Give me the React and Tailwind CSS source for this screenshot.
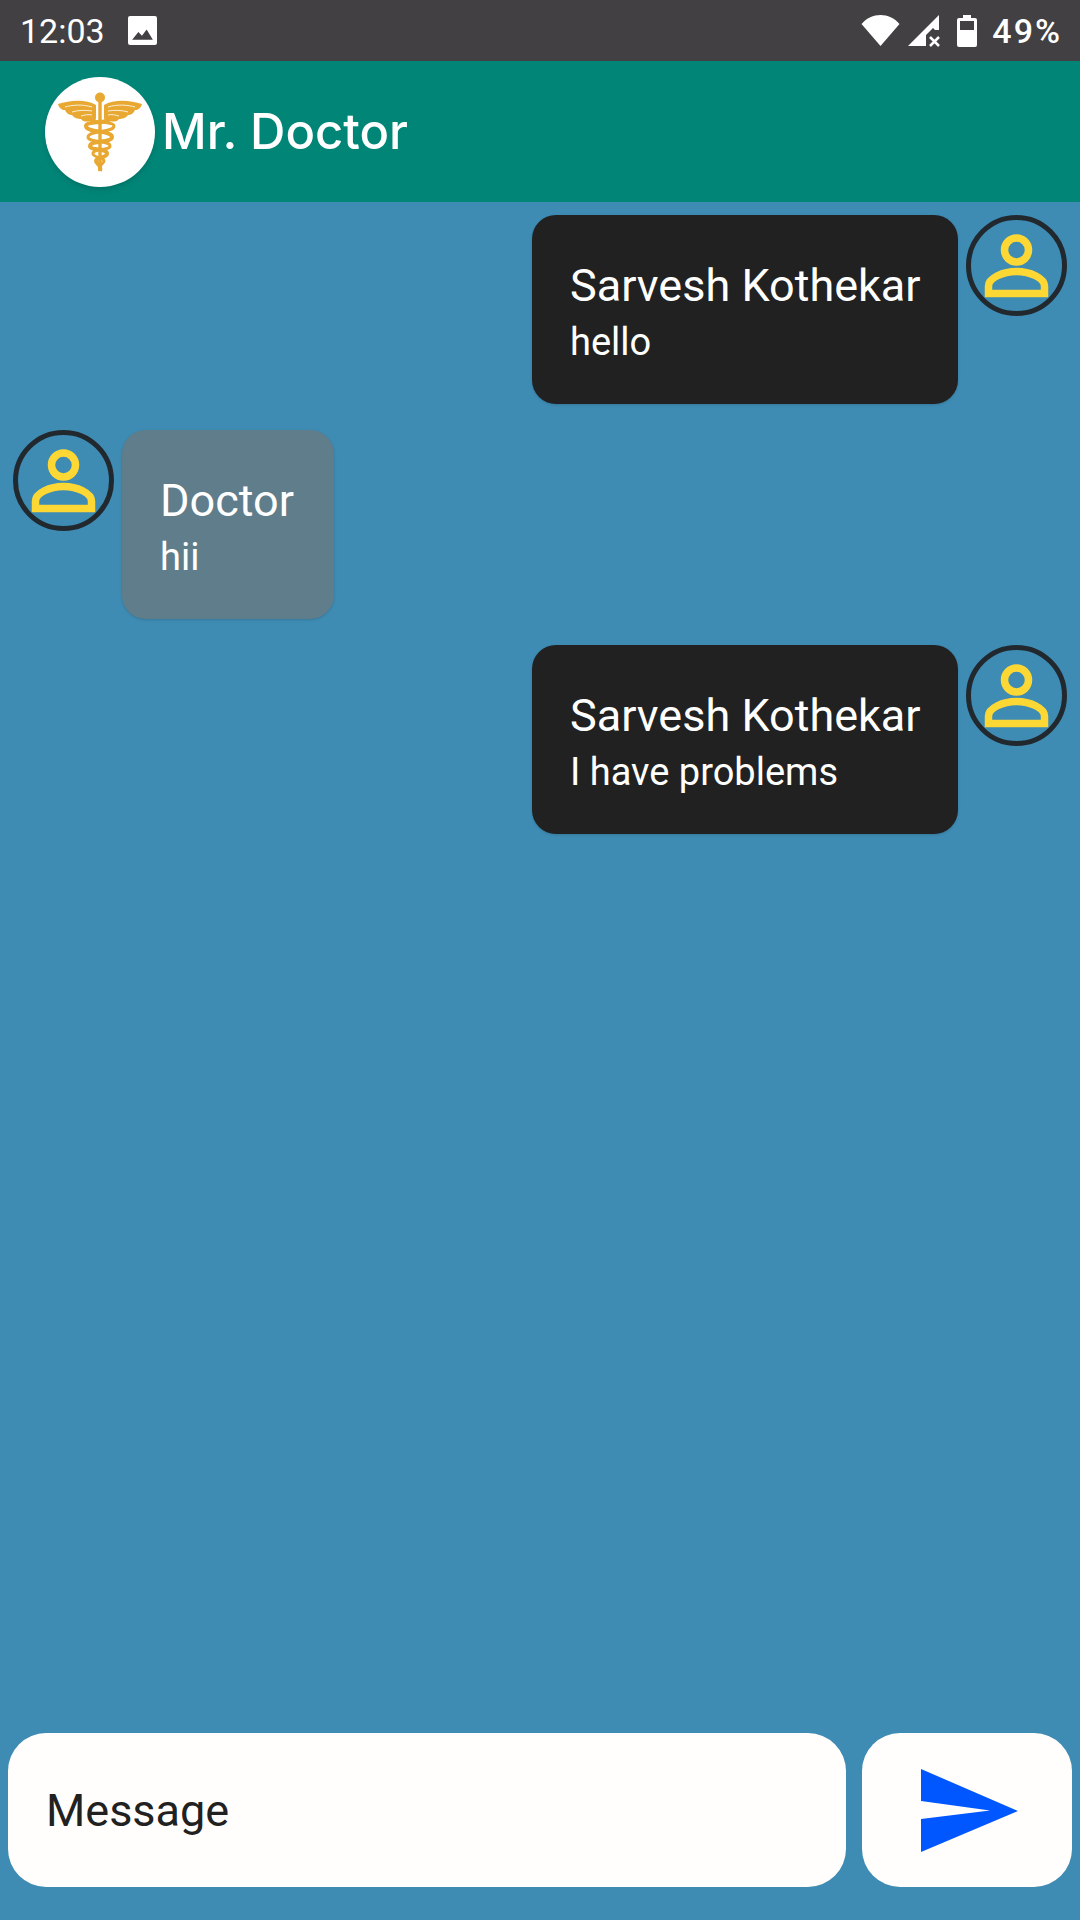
const roboto = { fontFamily: 'Roboto, sans-serif' };

const Person = () => (
  <svg viewBox="0 0 91 91" className="w-[91px] h-[91px]">
    <circle cx="45.500" cy="30" r="12" fill="none" stroke="#fdd835" strokeWidth="7.500" />
    <path d="M17.500 73.500 V66 C17.500 58 32 51.500 45.500 51.500 C59 51.500 73.500 58 73.500 66 V73.500 Z" fill="none" stroke="#fdd835" strokeWidth="7.500" />
  </svg>
);

const Avatar = () => (
  <div className="w-[101px] h-[101px] shrink-0 rounded-full border-[5px] border-[#22292e] flex items-center justify-center">
    <Person />
  </div>
);

const Bubble = ({ name, text, dark }) => (
  <div className={`h-[189px] rounded-[24px] pt-[43px] pl-[38px] text-white shadow-sm ${dark ? 'w-[426px] bg-[#212121]' : 'w-[212px] bg-[#607d8b]'}`}>
    <div className="text-[45px] leading-[56px] whitespace-nowrap">{name}</div>
    <div className="text-[38px] leading-[56px] whitespace-nowrap">{text}</div>
  </div>
);

const Sent = ({ name, text }) => (
  <div className="flex justify-end gap-[8px] pr-[13px]">
    <Bubble name={name} text={text} dark />
    <Avatar />
  </div>
);

const Received = ({ name, text }) => (
  <div className="flex gap-[8px] pl-[13px]">
    <Avatar />
    <Bubble name={name} text={text} />
  </div>
);

const Caduceus = () => (
  <svg viewBox="0 0 84 80" className="w-[84px] h-[80px]">
    <g fill="#e8a832">
      <circle cx="42" cy="5.500" r="5" />
      <rect x="40.300" y="10" width="3.400" height="68" />
      <path d="M38 13 C28 7 12 8 0 12 C1 16 4 18 7 18 C8 21 11 23 14 23 C16 26 20 27 23 27 C25 30 29 30 32 29 C35 31 38 29 38 26 Z" />
      <path d="M46 13 C56 7 72 8 84 12 C83 16 80 18 77 18 C76 21 73 23 70 23 C68 26 64 27 61 27 C59 30 55 30 52 29 C49 31 46 29 46 26 Z" />
    </g>
    <g fill="none" stroke="#fff" strokeWidth="0.800">
      <path d="M34 15 C24 12 14 13 7 15 M34 19 C28 18 20 18 14 20 M34 23 C30 22 27 23 23 24" />
      <path d="M50 15 C60 12 70 13 77 15 M50 19 C56 18 64 18 70 20 M50 23 C54 22 57 23 61 24" />
    </g>
    <g fill="none" stroke="#e8a832" strokeWidth="4">
      <path d="M50 27 C56 31 28 29 28 34 C28 41 54 38 54 45 C54 51 32 48 32 54 C32 59 50 56 49 62 C48 66 38 65 38 69 C38 72 44 72 42 79" />
      <path d="M34 27 C28 31 56 29 56 34 C56 41 30 38 30 45 C30 51 52 48 52 54 C52 59 34 56 35 62 C36 66 46 65 46 69 C46 72 40 72 42 79" strokeWidth="3" />
    </g>
  </svg>
);

const App = () => {
  return (
    <div className="w-[1080px] h-[1920px] flex flex-col bg-[#3e8bb3] overflow-hidden" style={roboto}>

      {/* STATUS BAR */}
      <div className="h-[61px] shrink-0 bg-[#424042] flex items-center justify-between pl-[20px] pr-[18px] text-white">
        <div className="flex items-center gap-[23px]">
          <span className="text-[34px] leading-none">12:03</span>
          <svg viewBox="0 0 28 28" className="w-[29px] h-[29px]">
            <path fillRule="evenodd" fill="#fff" d="M2 0 H26 A2 2 0 0 1 28 2 V26 A2 2 0 0 1 26 28 H2 A2 2 0 0 1 0 26 V2 A2 2 0 0 1 2 0 Z M4 23 H24 L18 13 L13.500 19 L10 15.500 Z" />
          </svg>
        </div>
        <div className="flex items-center">
          <svg viewBox="0 0 38 31" className="w-[39px] h-[31px] mr-[8px]">
            <path fill="#fff" d="M19 31 L0 9 C5 3 12 0 19 0 C26 0 33 3 38 9 Z" />
          </svg>
          <svg viewBox="0 0 32 32" className="w-[32px] h-[32px] mr-[17px]">
            <path fill="#fff" d="M0 31 L31 0 V15 H27 L25 13 L18 20 V31 Z" />
            <path fill="none" stroke="#fff" strokeWidth="2.500" d="M22 22 L31 31 M31 22 L22 31" />
          </svg>
          <svg viewBox="0 0 20 32" className="w-[20px] h-[32px] mr-[15px]">
            <path fillRule="evenodd" fill="#fff" d="M6 0 H14 V3 H18 A2 2 0 0 1 20 5 V30 A2 2 0 0 1 18 32 H2 A2 2 0 0 1 0 30 V5 A2 2 0 0 1 2 3 H6 Z M3 6 V15 H17 V6 Z" />
          </svg>
          <span className="text-[34px] leading-none font-medium tracking-[2px]">49%</span>
        </div>
      </div>

      {/* HEADER */}
      <div className="h-[141px] shrink-0 bg-[#008577] flex items-center pl-[45px]">
        <div className="w-[110px] h-[110px] rounded-full bg-white shadow-md flex items-center justify-center">
          <Caduceus />
        </div>
        <h1 className="ml-[7px] text-[49px] font-medium text-white leading-none" style={{ fontFamily: 'Inter, sans-serif' }}>Mr. Doctor</h1>
      </div>

      {/* MESSAGES */}
      <div className="flex-1 flex flex-col gap-[26px] pt-[13px]">
        <Sent name="Sarvesh Kothekar" text="hello" />
        <Received name="Doctor" text="hii" />
        <Sent name="Sarvesh Kothekar" text="I have problems" />
      </div>

      {/* INPUT */}
      <div className="flex gap-[16px] px-[8px] pb-[33px]">
        <div className="w-[838px] h-[154px] rounded-[38px] bg-[#fffefc] flex items-center pl-[38px] pt-[2px] text-[45px] text-[#212121]">
          Message
        </div>
        <div className="flex-1 h-[154px] rounded-[38px] bg-[#fffefc] flex items-center justify-center">
          <svg viewBox="0 0 97 83" className="w-[97px] h-[83px] ml-[5px]">
            <path fill="#0057ff" d="M0 0 L97 42 L0 83 V50 L69 41.500 L0 32 Z" />
          </svg>
        </div>
      </div>

    </div>
  );
};

export default App;
